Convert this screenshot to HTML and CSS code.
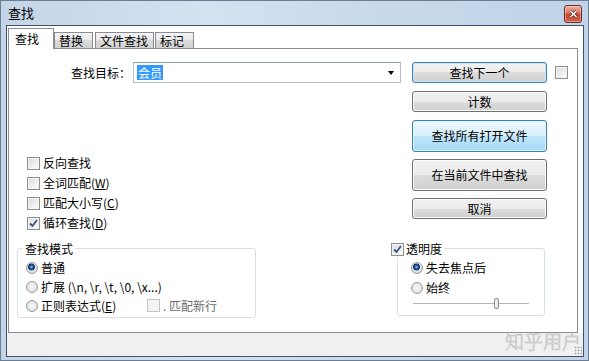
FILE: index.html
```html
<!doctype html>
<html>
  <head>
    <meta charset="utf-8">
    <title>查找</title>
    <link rel="stylesheet" href="styles.css">
  </head>
  <body>
    <div class="window">
      <div class="titlebar">
        <span class="title">查找</span>
        <span class="close">
          <svg width="9" height="8" viewBox="0 0 9 8"><path d="M1.5 1 L7.5 7 M7.5 1 L1.5 7" stroke="#5a1a10" stroke-width="3"/><path d="M1.5 1 L7.5 7 M7.5 1 L1.5 7" stroke="#fff" stroke-width="1.6"/></svg>
        </span>
      </div>
      <div class="client">
        <div class="tabs">
          <div class="tab active">查找</div>
          <div class="tab t-replace">替换</div>
          <div class="tab t-files">文件查找</div>
          <div class="tab t-mark">标记</div>
        </div>
        <div class="panel">
          <div class="left">
            <div class="find-row">
              <span class="find-label">查找目标：</span>
              <div class="combo"><span class="sel">会员</span><span class="arrow"></span></div>
            </div>
            <div class="options">
              <div class="check"><span class="cb"></span>反向查找</div>
              <div class="check"><span class="cb"></span>全词匹配(<u>W</u>)</div>
              <div class="check"><span class="cb"></span>匹配大小写(<u>C</u>)</div>
              <div class="check"><span class="cb"><svg width="11" height="11" viewBox="0 0 11 11"><path d="M2 5.5 L4.5 8 L9 2" fill="none" stroke="#3a5283" stroke-width="1.8"/></svg></span>循环查找(<u>D</u>)</div>
            </div>
            <div class="group mode">
              <div class="group-title">查找模式</div>
              <div class="radio first"><span class="rb on"></span>普通</div>
              <div class="radio"><span class="rb"></span>扩展 (\n, \r, \t, \0, \x...)</div>
              <div class="radio"><span class="rb"></span><span class="regex">正则表达式(<u>E</u>)</span><span class="cb off"></span><span class="dim">. 匹配新行</span></div>
            </div>
          </div>
          <div class="right">
            <div class="btn-row"><button class="btn default">查找下一个</button><span class="cb"></span></div>
            <button class="btn">计数</button>
            <button class="btn tall hot">查找所有打开文件</button>
            <button class="btn tall">在当前文件中查找</button>
            <button class="btn">取消</button>
            <div class="group trans">
              <div class="group-title"><span class="cb"><svg width="11" height="11" viewBox="0 0 11 11"><path d="M2 5.5 L4.5 8 L9 2" fill="none" stroke="#3a5283" stroke-width="1.8"/></svg></span>透明度</div>
              <div class="radio first"><span class="rb on"></span>失去焦点后</div>
              <div class="radio"><span class="rb"></span>始终</div>
              <div class="slider"><span class="thumb"></span></div>
            </div>
          </div>
        </div>
        <div class="statusbar"><span class="watermark">知乎用户</span><span class="grip"></span></div>
      </div>
    </div>
  </body>
</html>
```

FILE: styles.css
```css
* { box-sizing: border-box; }
body {
  margin: 0;
  width: 589px;
  height: 361px;
  overflow: hidden;
  font-family: "Noto Sans CJK SC", "Noto Sans", sans-serif;
  font-size: 12px;
  line-height: 16px;
  color: #000;
}
u { text-decoration: underline; text-underline-offset: 1px; }

/* window frame */
.window {
  width: 589px;
  height: 361px;
  display: flex;
  flex-direction: column;
  padding: 0 4px 3px 5px;
  border: 1px solid #6a7d93;
  background: linear-gradient(to right, #c4d5e7, #d3e2f1 35%, #c8d9ea 65%, #bfd2e7);
}
.titlebar {
  height: 24px;
  display: flex;
  align-items: flex-start;
  justify-content: space-between;
}
.title { margin: 4px 0 0 2px; font-size: 13px; }
.close {
  width: 18px;
  height: 18px;
  margin: 4px 2px 0 0;
  display: flex;
  align-items: center;
  justify-content: center;
  border: 1px solid #6e2b1f;
  border-radius: 3px;
  background: linear-gradient(#eab0a2, #d77763 45%, #c4452d 50%, #d2634a);
  box-shadow: inset 0 0 0 1px rgba(255, 255, 255, 0.35);
}

/* client */
.client {
  flex: 1;
  display: flex;
  flex-direction: column;
  border: 1px solid #405269;
  background: #fff;
}
.tabs {
  height: 22px;
  display: flex;
  align-items: flex-end;
  padding-left: 1px;
}
.tab {
  height: 16px;
  padding-left: 4px;
  line-height: 15px;
  border: 1px solid #898c95;
  border-bottom: none;
  background: linear-gradient(#f4f4f4, #e8e8e8 50%, #dcdcdc 50%, #d0d0d0);
}
.tab.active {
  width: 46px;
  height: 21px;
  margin-bottom: -1px;
  padding-left: 6px;
  line-height: 19px;
  background: #fff;
  position: relative;
  z-index: 1;
}
.t-replace { width: 39px; margin-right: 2px; }
.t-files { width: 59px; margin-right: 1px; }
.t-mark { width: 39px; }

.panel {
  height: 285px;
  width: 570px;
  margin-left: 1px;
  display: flex;
  border: 1px solid #898c95;
}
.left { width: 392px; }
.right { width: 176px; display: flex; flex-direction: column; }

.find-row { display: flex; margin-top: 13px; height: 21px; align-items: center; }
.find-label { width: 122px; text-align: right; }
.combo {
  width: 268px;
  height: 21px;
  margin-left: 2px;
  display: flex;
  align-items: center;
  justify-content: space-between;
  padding: 0 6px 0 3px;
  border: 1px solid #b4bfca;
  border-top-color: #8d9cad;
}
.sel { background: #3399ff; color: #fff; padding: 0 1px; line-height: 15px; }
.arrow {
  width: 0;
  height: 0;
  border-left: 3.5px solid transparent;
  border-right: 3.5px solid transparent;
  border-top: 4px solid #000;
}

.options { margin-top: 70px; }
.check, .radio { display: flex; align-items: center; height: 20px; }
.options .check { padding-left: 18px; }
.cb {
  width: 13px;
  height: 13px;
  margin-right: 3px;
  flex: none;
  display: flex;
  align-items: center;
  justify-content: center;
  border: 1px solid #8e8f8f;
  background: linear-gradient(135deg, #d9dbdf, #f3f3f3 70%, #fcfcfc);
  box-shadow: inset 0 0 0 1px #f4f4f4;
}
.cb.off { border-color: #c4c4c4; background: #f4f4f4; box-shadow: none; }
.rb {
  width: 12px;
  height: 12px;
  margin-right: 3px;
  flex: none;
  border-radius: 50%;
  border: 1px solid #9a9a9a;
  background: radial-gradient(circle at 50% 45%, #f7f7f7, #d5d9de);
}
.rb.on {
  background: radial-gradient(circle at 45% 40%, #9cc8ef 0, #2a66ab 1.5px, #0d2e59 3.2px, #e9eef3 3.8px, #d1d6dc 6px);
}

.group {
  border: 1px solid #d5dfe5;
  border-radius: 3px;
}
.group-title {
  width: fit-content;
  height: 16px;
  margin-top: -8px;
  display: flex;
  align-items: center;
  background: #fff;
}
.mode { width: 239px; height: 70px; margin: 15px 0 0 8px; }
.mode .group-title { margin-left: 5px; padding: 0 2px; }
.mode .radio { padding-left: 8px; height: 19px; }
.radio.first { margin-top: 1px; }
.regex { width: 106px; }
.dim { color: #6d6d6d; }

.btn-row { display: flex; align-items: center; margin-top: 13px; }
.btn {
  width: 135px;
  height: 21px;
  margin-left: 11px;
  padding: 0;
  font: inherit;
  color: #000;
  border: 1px solid #707070;
  border-radius: 3px;
  background: linear-gradient(#f2f2f2, #ebebeb 50%, #dddddd 50%, #cfcfcf);
  box-shadow: inset 0 0 0 1px #fbfbfb;
}
.btn + .btn, .btn-row + .btn { margin-top: 8px; }
.btn.tall { height: 32px; }
.btn.tall + .btn { margin-top: 7px; }
.btn.default {
  border-color: #3c7fb1;
  box-shadow: inset 0 0 0 1px #c9e6f8;
}
.btn-row .cb { margin-left: 8px; }
.btn.hot {
  border-color: #3c7fb1;
  background: linear-gradient(#eaf6fd, #d9f0fc 50%, #bee6fd 50%, #a7d9f5);
  box-shadow: inset 0 0 0 1px #e4f4fd;
}

.trans { width: 148px; height: 68px; margin: 29px 0 0 -4px; }
.trans .group-title { margin-left: -7px; padding-right: 2px; }
.trans .cb { margin-right: 2px; }
.trans .radio { padding-left: 13px; height: 20px; }
.slider {
  width: 116px;
  height: 11px;
  margin: 0 0 0 15px;
  display: flex;
  align-items: center;
  background: linear-gradient(#b5b5b5, #b5b5b5) center / 100% 1px no-repeat;
}
.thumb {
  width: 5px;
  height: 11px;
  margin-left: 81px;
  border: 1px solid #8a8a8a;
  border-radius: 2px;
  background: linear-gradient(to right, #fdfdfd, #e2e2e2);
}

.statusbar {
  flex: 1;
  display: flex;
  justify-content: flex-end;
  background: #f0f0f0;
}
.watermark {
  margin: -2px 1px 0 0;
  font-size: 19px;
  line-height: 20px;
  font-weight: 300;
  color: #f6f6f6;
  -webkit-text-stroke: 0.5px #b4b4b4;
}
.grip {
  width: 8px;
  height: 9px;
  margin: 0 1px 1px -8px;
  align-self: flex-end;
  background: radial-gradient(circle, #a5a5a5 0.8px, transparent 1.1px) 0 0 / 3px 3px;
}
```
